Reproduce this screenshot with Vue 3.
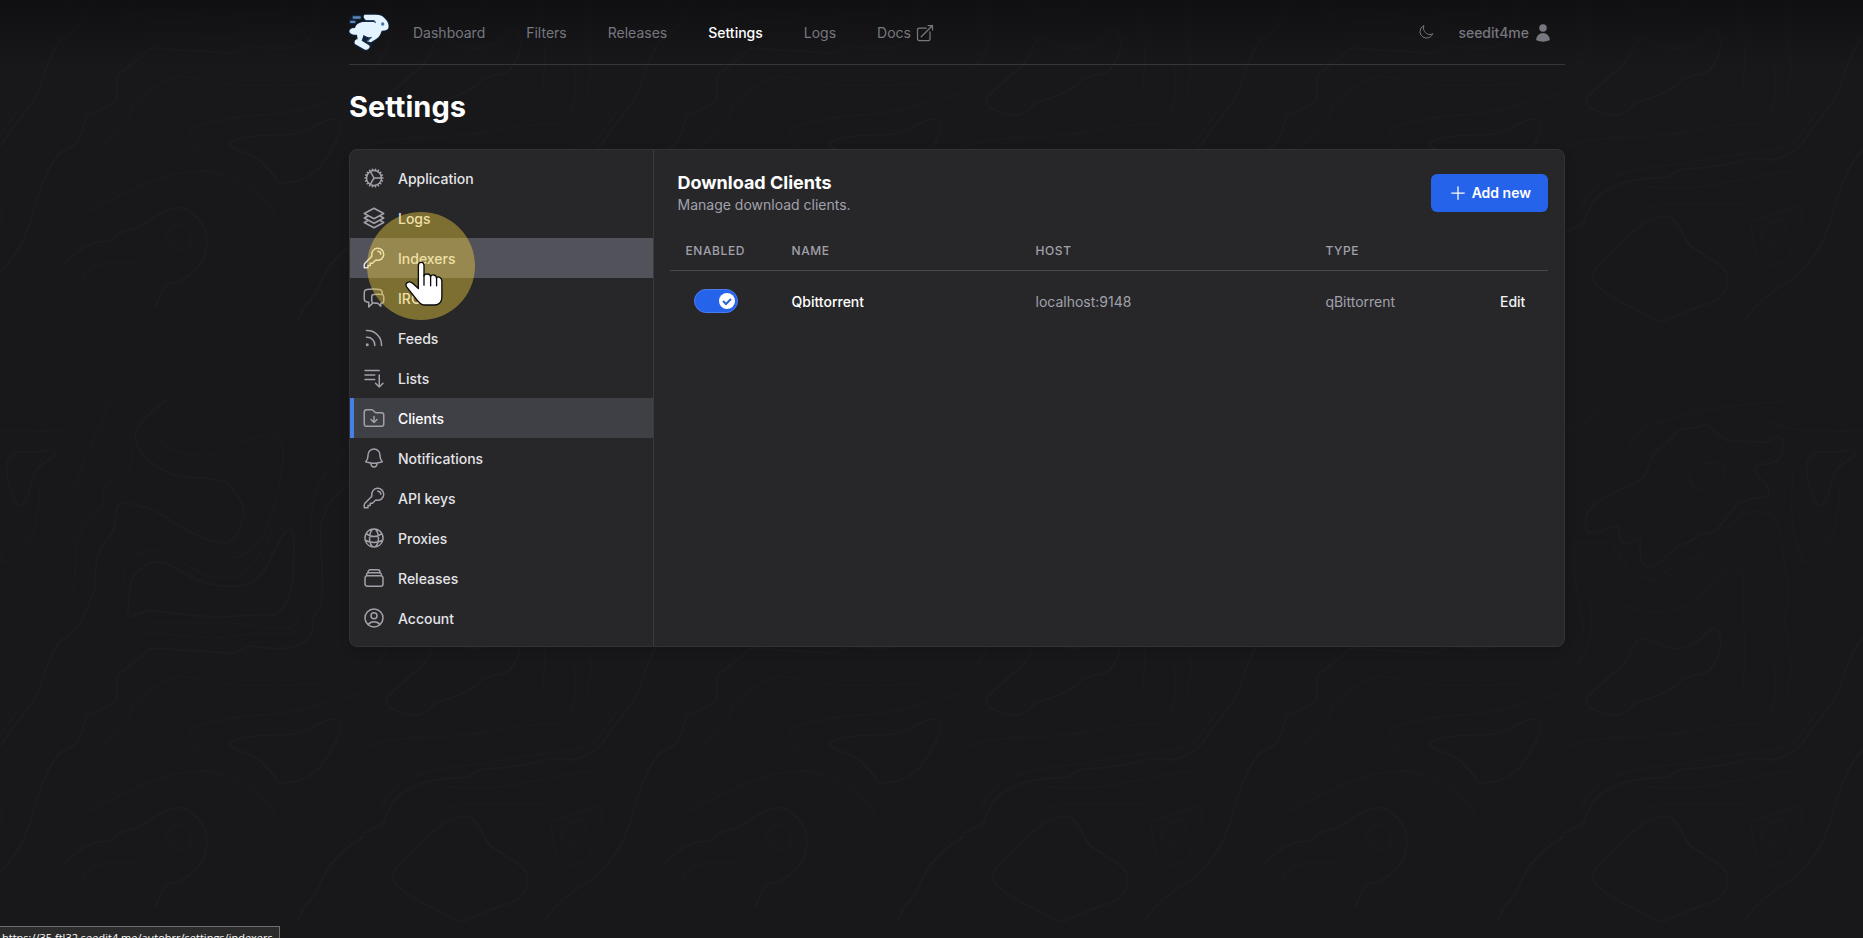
<script setup>
import { ref } from 'vue'

const navItems = [
  { label: 'Dashboard' },
  { label: 'Filters' },
  { label: 'Releases' },
  { label: 'Settings', current: true },
  { label: 'Logs' },
  { label: 'Docs', external: true },
]

const keyIcon =
  'M15.75 5.25a3 3 0 0 1 3 3m3 0a6 6 0 0 1-7.029 5.912c-.563-.097-1.159.026-1.563.43L10.5 17.25H8.25v2.25H6v2.25H2.25v-2.818c0-.597.237-1.17.659-1.591l6.499-6.499c.404-.404.527-1 .43-1.563A6 6 0 1 1 21.75 8.25Z'

const sections = [
  {
    label: 'Application',
    icon: 'M4.5 12a7.5 7.5 0 0 0 15 0m-15 0a7.5 7.5 0 1 1 15 0m-15 0H3m16.5 0H21m-1.5 0H12m-8.457 3.077 1.41-.513m14.095-5.13 1.41-.513M5.106 17.785l1.15-.964m11.49-9.642 1.149-.964M7.501 19.795l.75-1.3m7.5-12.99.75-1.3m-6.063 16.658.26-1.477m2.605-14.772.26-1.477m0 17.726-.26-1.477M10.698 4.614l-.26-1.477M16.5 19.794l-.75-1.299M7.5 4.205 12 12m6.894 5.785-1.149-.964M6.256 7.178l-1.15-.964m15.352 8.864-1.41-.513M4.954 9.435l-1.41-.514M12.002 12l-3.75 6.495',
  },
  {
    label: 'Logs',
    icon: 'M6.429 9.75 2.25 12l4.179 2.25m0-4.5 5.571 3 5.571-3m-11.142 0L2.25 7.5 12 2.25l9.75 5.25-4.179 2.25m0 0L21.75 12l-4.179 2.25m0 0 4.179 2.25L12 21.75 2.25 16.5l4.179-2.25m11.142 0-5.571 3-5.571-3',
  },
  { label: 'Indexers', icon: keyIcon, hovered: true },
  {
    label: 'IRC',
    icon: 'M20.25 8.511c.884.284 1.5 1.128 1.5 2.097v4.286c0 1.136-.847 2.1-1.98 2.193-.34.027-.68.052-1.02.072v3.091l-3-3c-1.354 0-2.694-.055-4.02-.163a2.115 2.115 0 0 1-.825-.242m9.345-8.334a2.126 2.126 0 0 0-.476-.095 48.64 48.64 0 0 0-8.048 0c-1.131.094-1.976 1.057-1.976 2.192v4.286c0 .837.46 1.58 1.155 1.951m9.345-8.334V6.637c0-1.621-1.152-3.026-2.76-3.235A48.455 48.455 0 0 0 11.25 3c-2.115 0-4.198.137-6.24.402-1.608.209-2.76 1.614-2.76 3.235v6.226c0 1.621 1.152 3.026 2.76 3.235.577.075 1.157.14 1.74.194V21l4.155-4.155',
  },
  {
    label: 'Feeds',
    icon: 'M12.75 19.5v-.75a7.5 7.5 0 0 0-7.5-7.5H4.5m0-6.75h.75c7.87 0 14.25 6.38 14.25 14.25v.75M6 18.75a.75.75 0 1 1-1.5 0 .75.75 0 0 1 1.5 0Z',
  },
  {
    label: 'Lists',
    icon: 'M3 4.5h14.25M3 9h9.75M3 13.5h9.75m4.5-4.5v12m0 0-3.75-3.75M17.25 21 21 17.25',
  },
  {
    label: 'Clients',
    icon: 'm9 13.5 3 3m0 0 3-3m-3 3v-6m1.06-4.19-2.12-2.12a1.5 1.5 0 0 0-1.061-.44H4.5A2.25 2.25 0 0 0 2.25 6v12a2.25 2.25 0 0 0 2.25 2.25h15A2.25 2.25 0 0 0 21.75 18V9a2.25 2.25 0 0 0-2.25-2.25h-5.379a1.5 1.5 0 0 1-1.06-.44Z',
    current: true,
  },
  {
    label: 'Notifications',
    icon: 'M14.857 17.082a23.848 23.848 0 0 0 5.454-1.31A8.967 8.967 0 0 1 18 9.75V9A6 6 0 0 0 6 9v.75a8.967 8.967 0 0 1-2.312 6.022c1.733.64 3.56 1.085 5.455 1.31m5.714 0a24.255 24.255 0 0 1-5.714 0m5.714 0a3 3 0 1 1-5.714 0',
  },
  { label: 'API keys', icon: keyIcon },
  {
    label: 'Proxies',
    icon: 'M12 21a9.004 9.004 0 0 0 8.716-6.747M12 21a9.004 9.004 0 0 1-8.716-6.747M12 21c2.485 0 4.5-4.03 4.5-9S14.485 3 12 3m0 18c-2.485 0-4.5-4.03-4.5-9S9.515 3 12 3m0 0a8.997 8.997 0 0 1 7.843 4.582M12 3a8.997 8.997 0 0 0-7.843 4.582m15.686 0A11.953 11.953 0 0 1 12 10.5c-2.998 0-5.74-1.1-7.843-2.918m15.686 0A8.959 8.959 0 0 1 21 12c0 .778-.099 1.533-.284 2.253m0 0A17.919 17.919 0 0 1 12 16.5c-3.162 0-6.133-.815-8.716-2.247m0 0A9.015 9.015 0 0 1 3 12c0-1.605.42-3.113 1.157-4.418',
  },
  {
    label: 'Releases',
    icon: 'M6 6.878V6a2.25 2.25 0 0 1 2.25-2.25h7.5A2.25 2.25 0 0 1 18 6v.878m-12 0c.235-.083.487-.128.75-.128h10.5c.263 0 .515.045.75.128m-12 0A2.25 2.25 0 0 0 4.5 9v.878m13.5-3A2.25 2.25 0 0 1 19.5 9v.878m0 0a2.246 2.246 0 0 0-.75-.128H5.25c-.263 0-.515.045-.75.128m15 0A2.25 2.25 0 0 1 21 12v6a2.25 2.25 0 0 1-2.25 2.25H5.25A2.25 2.25 0 0 1 3 18v-6c0-.98.626-1.813 1.5-2.122',
  },
  {
    label: 'Account',
    icon: 'M17.982 18.725A7.488 7.488 0 0 0 12 15.75a7.488 7.488 0 0 0-5.982 2.975m11.963 0a9 9 0 1 0-11.963 0m11.963 0A8.966 8.966 0 0 1 12 21a8.966 8.966 0 0 1-5.982-2.275M15 9.75a3 3 0 1 1-6 0 3 3 0 0 1 6 0Z',
  },
]

const clients = ref([
  { id: 1, name: 'Qbittorrent', host: 'localhost:9148', type: 'qBittorrent', enabled: true },
])
</script>

<template>
  <div class="page">
    <svg class="topography" aria-hidden="true">
      <defs>
        <pattern id="contours" x="63" y="-200" width="600" height="600" patternUnits="userSpaceOnUse">
          <g class="contour" transform="scale(.3333)">
            <path d="M310 0C250 45 205 85 220 130C235 170 290 215 350 230C410 236 460 232 495 252C540 300 550 330 538 365C520 415 510 435 470 428C380 410 330 360 270 330C220 315 180 300 165 315C150 350 165 380 140 410C110 440 95 470 95 560C90 600 60 650 45 680L0 720" />
            <path d="M193 650C200 620 195 560 210 530C240 495 270 475 310 490C370 520 400 550 480 558C560 562 590 545 615 490C640 440 660 390 680 388C700 400 690 450 692 520C685 590 660 640 630 645C560 640 520 655 440 650C350 645 290 630 250 633C220 640 205 655 193 650Z" />
            <path d="M855 250C800 300 775 340 772 400C775 480 785 560 772 620C745 650 750 670 747 700C720 745 680 755 560 738C540 745 520 765 480 758L350 750C310 748 280 740 262 747C230 770 200 800 165 825C155 850 165 880 160 900C130 925 100 930 75 945C55 975 60 1010 35 1035L0 1055" />
            <path d="M497 1030C540 1005 600 1005 700 1003C740 990 790 950 825 960C840 980 830 1010 800 1060C770 1110 730 1150 650 1150C620 1110 600 1080 560 1065C530 1050 500 1045 497 1030Z" />
            <path d="M0 1400C40 1350 80 1320 148 1323C170 1290 200 1290 230 1280C290 1240 330 1210 370 1228C430 1260 445 1320 420 1380C390 1430 350 1445 310 1455C290 1470 295 1500 275 1520" />
            <path d="M900 1310C820 1360 780 1420 765 1470C750 1500 720 1510 705 1560" />
          </g>
          <g class="contour faint" transform="scale(.3333)">
            <path d="M0 1145C60 1080 100 1040 200 970C190 930 230 870 340 830C390 825 410 850 440 853C540 855 640 860 770 850" />
            <path d="M60 1240C200 1170 320 1110 430 1113C520 1120 600 1180 640 1250M325 1280C345 1270 370 1280 380 1300C390 1340 375 1360 340 1345C300 1330 300 1300 325 1280Z" />
            <path d="M280 100C290 140 350 170 440 170C520 140 580 90 640 110C680 150 650 220 640 300C620 380 580 470 500 475M180 560C180 480 220 450 290 450C390 500 420 540 500 535C560 520 590 480 630 380" />
            <path d="M900 880C800 900 720 940 600 945C500 950 400 975 385 985C370 1010 390 1040 430 1060M900 100C850 140 830 170 800 200C740 280 745 350 745 420M0 300C50 260 60 170 100 100C130 50 120 20 150 0" />
            <path d="M260 668L500 668C600 680 700 710 710 650M240 700C350 700 420 720 500 712C570 690 680 710 720 690M0 630C60 580 20 450 50 400C70 350 140 330 120 270C150 220 230 220 205 150M60 1440C70 1390 150 1380 230 1390" />
          </g>
          <g class="contour" transform="translate(300 0) scale(.3333)">
            <path d="M345 92C370 80 400 88 428 72C450 85 470 115 495 123L615 126C635 110 655 100 660 130C665 175 640 190 605 192C580 195 570 205 580 222C600 245 625 260 615 290C590 295 560 290 525 312C490 345 470 395 435 400C405 395 390 430 360 432C320 450 290 500 262 503C230 500 230 470 232 420C215 410 205 435 180 430C165 420 175 400 165 378C130 380 90 415 70 390C60 350 80 310 150 280C190 255 225 250 240 235C265 200 260 160 290 145C310 130 325 115 345 92Z" />
            <path d="M230 717C280 715 290 750 350 745C400 740 410 715 450 683C480 700 475 740 465 770C450 800 440 825 395 825C360 830 350 850 320 870C280 890 250 900 220 908C200 920 190 950 150 945C100 940 70 925 70 895C100 860 140 830 180 795C210 760 205 730 230 717Z" />
            <path d="M900 715C860 750 845 830 825 880C800 930 770 950 745 990C715 1050 670 1070 630 1080L565 1075C500 1095 430 1105 350 1108C330 1120 320 1135 290 1133C220 1135 160 1145 110 1185C70 1220 75 1250 60 1270L0 1300" />
            <path d="M310 1248C350 1260 355 1310 380 1335C415 1365 460 1380 485 1410C500 1440 495 1490 440 1510C390 1520 340 1550 300 1565C260 1560 230 1530 170 1505C130 1480 90 1460 90 1425C100 1390 130 1380 170 1335C210 1295 250 1250 310 1248Z" />
            <path d="M760 155L840 155C860 145 880 145 875 165C850 190 810 200 805 250C795 290 780 325 765 315C740 280 725 230 735 180Z" />
            <path d="M900 1050C840 1110 830 1180 800 1270C780 1340 730 1410 670 1450C620 1480 580 1510 540 1568" />
          </g>
          <g class="contour faint" transform="translate(300 0) scale(.3333)">
            <path d="M590 1280L660 1255C680 1280 665 1310 630 1340C605 1330 590 1300 590 1280ZM560 1265L710 1220C730 1250 700 1320 680 1370C650 1400 600 1410 585 1390Z" />
            <path d="M0 95C60 85 80 60 120 0M30 430L150 430C170 460 180 520 260 540C300 540 310 490 400 470C480 450 500 350 560 335C620 325 650 360 655 410C660 500 690 560 665 650C670 720 700 800 670 880" />
            <path d="M150 600C250 640 300 660 400 600C440 560 470 510 520 500C550 510 540 560 540 640C545 700 550 760 540 860M30 430C20 520 60 600 60 700M0 840C80 770 95 700 80 600" />
            <path d="M10 1040C100 1000 300 1020 400 990C500 970 560 970 600 970C640 920 640 860 635 800M50 1230C80 1160 150 1110 250 1105C400 1090 500 1060 620 1053C700 1040 720 1000 770 920M230 1240C300 1190 420 1220 560 1210M250 1160C400 1180 500 1140 700 1110" />
            <path d="M380 230C385 190 430 180 480 195C500 230 460 270 430 275C390 270 385 250 380 230ZM200 140C220 60 330 60 420 30C500 20 560 10 660 5M510 55L600 55C660 90 740 100 900 90M690 220C680 350 690 450 730 490C780 470 830 400 830 260" />
          </g>
        </pattern>
      </defs>
      <rect width="100%" height="100%" fill="url(#contours)" />
    </svg>

    <div class="header-shade">
      <header class="container topbar">
        <a class="logo" href="#" aria-label="autobrr">
          <svg viewBox="28 36 120 120" width="40" height="40" aria-hidden="true">
            <g class="rabbit-edge">
              <path d="M75 44H108C122 44 130 48 136 56C146 66 148 76 146 84C142 92 134 92 126 92C122 104 118 112 110 116C104 122 100 120 94 127L92 138C92 146 82 154 74 149L48 134C42 128 46 120 52 120L50 104C40 106 30 102 29 94C30 86 38 84 46 84C50 72 58 68 70 66H103C106 62 102 60 98 60H80C72 58 70 46 75 44Z" />
              <rect x="38" y="48" width="26" height="9" rx="4" />
              <rect x="30" y="61" width="18" height="9" rx="4" />
            </g>
            <path class="rabbit" d="M75 44H108C122 44 130 48 136 56C146 66 148 76 146 84C142 92 134 92 126 92C122 104 118 112 110 116C104 122 100 120 94 127L82 124L94 112C82 112 76 108 72 104L66 122L88 136C94 142 84 152 76 149L46 132C42 124 48 118 54 118L52 104C40 106 30 102 29 94C30 86 38 84 46 84C50 72 58 68 70 66H103C106 62 102 60 98 60H80C72 58 70 46 75 44Z" />
            <path class="rabbit-line" d="M76 62H98C104 62 107 64 106 69M96 112C91 112 88 118 84 122" />
            <rect class="dash" x="39" y="49" width="24" height="7" rx="2" />
            <rect class="dash" x="31" y="62" width="16" height="7" rx="2" />
            <circle class="eye" cx="129" cy="72" r="5" />
          </svg>
        </a>
        <nav class="nav" aria-label="Main">
          <a
            v-for="item in navItems"
            :key="item.label"
            href="#"
            class="nav-link"
            :class="{ 'is-current': item.current }"
          >
            {{ item.label }}
            <svg v-if="item.external" class="icon small" viewBox="0 0 24 24" aria-hidden="true">
              <path d="M13.5 6H5.25A2.25 2.25 0 0 0 3 8.25v10.5A2.25 2.25 0 0 0 5.25 21h10.5A2.25 2.25 0 0 0 18 18.75V10.5m-10.5 6L21 3m0 0h-5.25M21 3v5.25" />
            </svg>
          </a>
        </nav>
        <button class="theme" type="button" aria-label="Toggle theme">
          <svg class="icon tiny" viewBox="0 0 24 24" aria-hidden="true">
            <path d="M21.752 15.002A9.72 9.72 0 0 1 18 15.75c-5.385 0-9.75-4.365-9.75-9.75 0-1.33.266-2.597.748-3.752A9.753 9.753 0 0 0 3 11.25C3 16.635 7.365 21 12.75 21a9.753 9.753 0 0 0 9.002-5.998Z" />
          </svg>
        </button>
        <button class="user" type="button">
          seedit4me
          <svg class="icon small solid" viewBox="0 0 24 24" aria-hidden="true">
            <path d="M7.5 6a4.5 4.5 0 1 1 9 0 4.5 4.5 0 0 1-9 0ZM3.751 20.105a8.25 8.25 0 0 1 16.498 0 .75.75 0 0 1-.437.695A18.683 18.683 0 0 1 12 22.5c-2.786 0-5.433-.608-7.812-1.7a.75.75 0 0 1-.437-.695Z" />
          </svg>
        </button>
      </header>
    </div>

    <main class="container">
      <h1 class="page-title">Settings</h1>
      <div class="card">
        <aside class="sidebar">
          <ul class="menu">
            <li v-for="section in sections" :key="section.label" class="menu-item">
              <a
                href="#"
                class="menu-link"
                :class="{ 'is-current': section.current, 'is-hovered': section.hovered }"
              >
                <svg class="icon" viewBox="0 0 24 24" aria-hidden="true"><path :d="section.icon" /></svg>
                <span class="menu-text">{{ section.label }}</span>
              </a>
              <div v-if="section.hovered" class="pointer" aria-hidden="true">
                <svg class="hand" viewBox="192 360 120 142" width="40" height="47">
                  <path d="M235 438V376C235 364 252 364 252 376V408C255 400 270 400 272 410C276 402 288 404 290 414C294 408 306 412 306 424V472C306 488 296 496 284 496H252C242 496 236 488 230 480L200 442C192 430 206 422 216 429L235 446Z" />
                  <path class="knuckles" d="M252 406V436M272 410V438M290 414V438" />
                </svg>
              </div>
            </li>
          </ul>
        </aside>

        <section class="panel">
          <div class="panel-head">
            <div>
              <h2 class="panel-title">Download Clients</h2>
              <p class="panel-sub">Manage download clients.</p>
            </div>
            <button class="add" type="button">
              <svg class="icon small" viewBox="0 0 24 24" aria-hidden="true"><path d="M12 4.5v15m7.5-7.5h-15" /></svg>
              Add new
            </button>
          </div>
          <table class="clients">
            <colgroup>
              <col class="col-enabled" />
              <col class="col-name" />
              <col class="col-host" />
              <col />
              <col class="col-edit" />
            </colgroup>
            <thead>
              <tr>
                <th scope="col" class="first">Enabled</th>
                <th scope="col">Name</th>
                <th scope="col">Host</th>
                <th scope="col">Type</th>
                <td></td>
              </tr>
            </thead>
            <tbody>
              <tr v-for="client in clients" :key="client.id">
                <td class="toggle-cell">
                  <label class="switch">
                    <input v-model="client.enabled" type="checkbox" role="switch" :aria-label="`Enable ${client.name}`" />
                    <span class="knob">
                      <svg viewBox="0 0 12 12" width="12" height="12" aria-hidden="true">
                        <path d="M2 6l3 3 5-5" />
                      </svg>
                    </span>
                  </label>
                </td>
                <td class="name">{{ client.name }}</td>
                <td>{{ client.host }}</td>
                <td>{{ client.type }}</td>
                <td class="edit-cell"><button class="edit" type="button">Edit</button></td>
              </tr>
            </tbody>
          </table>
        </section>
      </div>
    </main>

    <div class="status">https://35.ftl32.seedit4.me/autobrr/settings/indexers</div>
  </div>
</template>

<style>
body {
  background: #18181b;
}
</style>

<style scoped>
.page {
  position: relative;
  min-height: 100vh;
  overflow: hidden;
  background: #18181b;
  color: #fff;
  font: 14px/20px Inter, sans-serif;
}
.page *,
.page *::before {
  box-sizing: border-box;
}
a {
  color: inherit;
  text-decoration: none;
}
button {
  margin: 0;
  padding: 0;
  border: 0;
  background: none;
  color: inherit;
  font: inherit;
}
.topography {
  position: absolute;
  inset: 0;
  width: 100%;
  height: 100%;
}
.contour path {
  fill: none;
  stroke: #1c1c1f;
  stroke-width: 4;
}
.contour.faint path {
  stroke: #1a1a1e;
}
.header-shade {
  position: relative;
  padding-left: 51px;
  background: linear-gradient(#101012, rgba(24, 24, 27, 0));
}
.container {
  position: relative;
  max-width: 1216px;
  margin: 0 auto;
}
main.container {
  max-width: 1267px;
  padding-left: 51px;
}
.icon {
  flex: none;
  width: 24px;
  height: 24px;
  fill: none;
  stroke: currentColor;
  stroke-width: 1.5;
  stroke-linecap: round;
  stroke-linejoin: round;
}
.icon.small {
  width: 20px;
  height: 20px;
}
.icon.tiny {
  width: 16px;
  height: 16px;
}
.icon.solid {
  fill: currentColor;
  stroke: none;
}
.topbar {
  display: flex;
  align-items: center;
  height: 65px;
  border-bottom: 1px solid #363639;
  color: #77777f;
}
.logo {
  height: 40px;
}
.rabbit-edge {
  fill: #10253d;
  stroke: #10253d;
  stroke-width: 6;
}
.rabbit {
  fill: #e3f3ff;
}
.rabbit-line {
  fill: none;
  stroke: #234567;
  stroke-width: 4;
}
.dash {
  fill: #5e88b4;
}
.eye {
  fill: #4474a8;
}
.nav {
  display: flex;
  flex: 1;
  gap: 17px;
  margin-left: 12px;
}
.nav-link {
  display: flex;
  align-items: center;
  gap: 4px;
  padding: 10px 12px 8px;
}
.nav-link.is-current {
  color: #fff;
  font-weight: 500;
}
.theme {
  display: flex;
  margin-right: 24px;
}
.user {
  display: flex;
  align-items: center;
  gap: 4px;
  margin-right: 12px;
  padding: 10px 0 8px;
  font-weight: 500;
}
.page-title {
  margin: 24px 0;
  font-size: 29px;
  line-height: 36px;
  font-weight: 700;
}
.card {
  display: grid;
  grid-template-columns: 1fr 3fr;
  border: 1px solid #333336;
  border-radius: 8px;
  background: #27272a;
  box-shadow: 0 4px 10px rgba(0, 0, 0, 0.15);
}
.sidebar {
  padding: 8px 0;
  border-right: 1px solid #3a3a3e;
}
.menu {
  margin: 0;
  padding: 0;
  list-style: none;
}
.menu-item {
  position: relative;
}
.menu-link {
  display: flex;
  align-items: center;
  gap: 12px;
  height: 40px;
  padding-left: 8px;
  border-left: 4px solid transparent;
  color: #e4e4e7;
  font-weight: 500;
}
.menu-text {
  padding-top: 2px;
}
.menu-link .icon {
  color: #a1a1aa;
}
.menu-link.is-current {
  border-left-color: #4580e8;
  background: #3f3f46;
  color: #fff;
}
.menu-link.is-hovered {
  border-left-color: #52525b;
  background: #52525b;
}
.menu-link.is-hovered .icon {
  color: #e4e4e7;
}
.pointer {
  position: absolute;
  z-index: 2;
  top: -26px;
  left: 17px;
  width: 108px;
  height: 108px;
  border-radius: 50%;
  background: rgba(255, 217, 62, 0.4);
  pointer-events: none;
}
.hand {
  position: absolute;
  top: 48px;
  left: 37px;
  fill: #fff;
  stroke: #0a0a0a;
  stroke-width: 4;
  stroke-linejoin: round;
}
.knuckles {
  fill: none;
  stroke-linecap: round;
}
.panel {
  min-width: 0;
  padding: 21px 16px;
}
.panel-head {
  display: flex;
  align-items: center;
  justify-content: space-between;
  margin-bottom: 16px;
  padding-left: 8px;
}
.panel-title {
  margin: 0;
  font-size: 18px;
  line-height: 24px;
  font-weight: 700;
}
.panel-sub {
  margin: 0;
  color: #a1a1aa;
}
.add {
  display: flex;
  align-items: center;
  gap: 4px;
  height: 38px;
  padding: 0 17px;
  border-radius: 6px;
  background: #2563eb;
  font-weight: 600;
}
.clients {
  width: 100%;
  border-collapse: collapse;
  table-layout: fixed;
}
.col-enabled {
  width: 122px;
}
.col-name {
  width: 244px;
}
.col-host {
  width: 33%;
}
.col-edit {
  width: 60px;
}
.clients th,
.clients td {
  padding: 2px 0 0;
  text-align: left;
  color: #a1a1aa;
}
.clients thead tr {
  height: 39px;
  border-bottom: 1px solid #4a4a4e;
}
.clients th {
  font-size: 12px;
  font-weight: 500;
  letter-spacing: 0.05em;
  text-transform: uppercase;
}
.clients th.first {
  padding-left: 16px;
}
.clients tbody tr {
  height: 62px;
}
.clients td.name {
  color: #fff;
  font-weight: 500;
}
.clients td.toggle-cell {
  padding: 0 0 0 24px;
}
.clients td.edit-cell {
  padding-left: 12px;
}
.edit {
  color: #f4f4f5;
  font-weight: 500;
}
.switch {
  position: relative;
  display: block;
  width: 44px;
  height: 24px;
}
.switch input {
  display: block;
  width: 44px;
  height: 24px;
  margin: 0;
  border: 1px solid #4a7cf0;
  border-radius: 12px;
  background: #2563eb;
  appearance: none;
}
.knob {
  position: absolute;
  top: 4px;
  right: 3px;
  display: grid;
  place-items: center;
  width: 16px;
  height: 16px;
  border-radius: 50%;
  background: #fff;
  pointer-events: none;
}
.knob svg {
  fill: none;
  stroke: #2f65cc;
  stroke-width: 2;
}
.status {
  position: fixed;
  bottom: 0;
  left: 0;
  height: 12px;
  padding: 3px 6px 0 2px;
  overflow: hidden;
  border-top: 1px solid #6e6e6e;
  border-right: 1px solid #6e6e6e;
  background: #2b2b2b;
  font: 11px/16px "Open Sans", "Noto Sans", sans-serif;
  white-space: nowrap;
}
</style>
